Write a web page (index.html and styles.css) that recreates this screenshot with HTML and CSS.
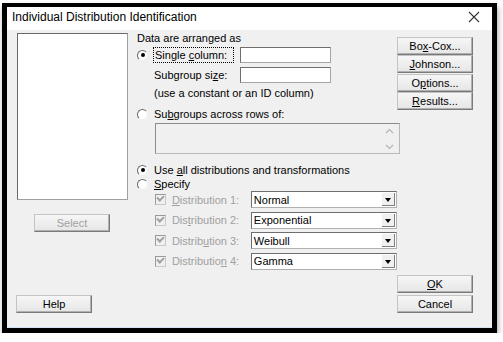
FILE: index.html
```html
<!DOCTYPE html>
<html>
<head>
    <title>Individual Distribution Identification</title>
    <link rel="stylesheet" href="styles.css">
</head>
<body>
    <div class="window">
        <div class="titlebar">
            <span class="title">Individual Distribution Identification</span>
            <svg class="close" width="12" height="12" viewBox="0 0 12 12">
                <path d="M1 1 L11 11 M11 1 L1 11" stroke="#333" stroke-width="1.1" fill="none"/>
            </svg>
        </div>

        <div class="content">
            <div class="col-left">
                <div class="listbox"></div>
                <div class="btn btn-select">Select</div>
                <div class="btn btn-help">Help</div>
            </div>

            <div class="col-mid">
                <div class="caption">Data are arranged as</div>

                <div class="row row-single">
                    <span class="radio checked"></span>
                    <span class="focus">Single <u>c</u>olumn:</span>
                    <span class="textbox"></span>
                </div>
                <div class="row row-size">
                    <span class="lbl">Subgroup si<u>z</u>e:</span>
                    <span class="textbox"></span>
                </div>
                <div class="note">(use a constant or an ID column)</div>

                <div class="row row-across">
                    <span class="radio"></span>
                    <span class="lbl">Su<u>b</u>groups across rows of:</span>
                </div>
                <div class="varbox">
                    <svg class="scroll" width="9" height="24" viewBox="0 0 9 24">
                        <path d="M1 6 L4.5 2.5 L8 6 M1 18 L4.5 21.5 L8 18" stroke="#b4b4b4" stroke-width="1.2" fill="none"/>
                    </svg>
                </div>

                <div class="row row-all">
                    <span class="radio checked"></span>
                    <span class="lbl">Use <u>a</u>ll distributions and transformations</span>
                </div>
                <div class="row row-specify">
                    <span class="radio"></span>
                    <span class="lbl"><u>S</u>pecify</span>
                </div>

                <div class="dists">
                    <div class="dist">
                        <span class="check"></span>
                        <span class="dlbl"><u>D</u>istribution 1:</span>
                        <div class="combo"><span>Normal</span><span class="drop"></span></div>
                    </div>
                    <div class="dist">
                        <span class="check"></span>
                        <span class="dlbl">Dis<u>t</u>ribution 2:</span>
                        <div class="combo"><span>Exponential</span><span class="drop"></span></div>
                    </div>
                    <div class="dist">
                        <span class="check"></span>
                        <span class="dlbl">Distrib<u>u</u>tion 3:</span>
                        <div class="combo"><span>Weibull</span><span class="drop"></span></div>
                    </div>
                    <div class="dist">
                        <span class="check"></span>
                        <span class="dlbl">Distributio<u>n</u> 4:</span>
                        <div class="combo"><span>Gamma</span><span class="drop"></span></div>
                    </div>
                </div>
            </div>

            <div class="col-right">
                <div class="btn">Bo<u>x</u>-Cox...</div>
                <div class="btn"><u>J</u>ohnson...</div>
                <div class="btn">O<u>p</u>tions...</div>
                <div class="btn"><u>R</u>esults...</div>
                <div class="btn btn-ok"><u>O</u>K</div>
                <div class="btn btn-cancel">Cancel</div>
            </div>
        </div>
    </div>
</body>
</html>
```

FILE: styles.css
```css
body {
    margin: 0;
    background-color: #ffffff;
    font-family: "Liberation Sans", Arial, sans-serif;
    font-size: 11px;
    color: #000000;
}

u {
    text-underline-offset: 1px;
}

.window {
    margin: 3px 0 0 2px;
    width: 485px;
    height: 321px;
    border: 5px solid #000000;
    border-top-width: 4px;
    box-shadow: 1px 4px 6px rgba(0, 0, 0, 0.35);
    display: flex;
    flex-direction: column;
}

.titlebar {
    height: 23px;
    background-color: #ffffff;
    display: flex;
    align-items: center;
    padding: 0 12px 0 5px;
}
.title {
    font-size: 12px;
    flex: 1;
    padding-bottom: 3px;
}
.close {
    margin-bottom: 3px;
}

.content {
    flex: 1;
    background-color: #f0f0f0;
    display: flex;
    border-bottom: 1px solid #d4e4f4;
}

/* left column */
.col-left {
    width: 129px;
    display: flex;
    flex-direction: column;
    padding: 3px 0 14px 0;
    box-sizing: border-box;
}
.listbox {
    margin-left: 10px;
    width: 109px;
    height: 165px;
    background-color: #ffffff;
    border: 1px solid #a0a0a0;
    border-top-color: #696969;
    border-left-color: #696969;
}
.btn-select {
    margin: 14px 0 0 27px;
    color: #a0a0a0;
}
.btn-help {
    margin: auto 0 0 9px;
}

/* buttons */
.btn {
    width: 74px;
    height: 16px;
    line-height: 16px;
    text-align: center;
    background: linear-gradient(#f6f6f6, #e6e6e6);
    border: 1px solid #c4c4c4;
    border-right-color: #7a7a7a;
    border-bottom-color: #7a7a7a;
    box-shadow: inset -1px -1px 0 #b0b0b0;
}

/* middle column */
.col-mid {
    width: 261px;
    display: flex;
    flex-direction: column;
}
.caption {
    height: 16px;
    line-height: 16px;
    margin-left: 1px;
}
.row {
    display: flex;
    align-items: center;
    height: 16px;
}
.row-single {
    margin-top: 1px;
}
.row-size {
    margin-top: 4px;
}
.row-across {
    margin-top: 7px;
    height: 14px;
}
.row-all {
    margin-top: 9px;
    height: 14px;
}
.row-specify {
    height: 14px;
}

.radio {
    width: 9px;
    height: 9px;
    margin-left: 1px;
    margin-right: 6px;
    border-radius: 50%;
    border: 1px solid;
    border-color: #6a6a6a #f0f0f0 #f0f0f0 #6a6a6a;
    background-color: #ffffff;
    position: relative;
}
.radio.checked::after {
    content: "";
    position: absolute;
    left: 2.5px;
    top: 2.5px;
    width: 4px;
    height: 4px;
    border-radius: 50%;
    background-color: #000000;
}

.focus {
    width: 78px;
    height: 14px;
    line-height: 14px;
    border: 1px dotted #000000;
    padding-left: 1px;
    box-sizing: content-box;
    margin-left: -1px;
}
.lbl {
    line-height: 14px;
}
.row-size .lbl {
    margin-left: 18px;
    width: 86px;
}
.textbox {
    width: 89px;
    height: 14px;
    background-color: #ffffff;
    border: 1px solid #a5a5a5;
    border-top-color: #6e6e6e;
    border-left-color: #6e6e6e;
}
.row-single .textbox {
    margin-left: 6px;
}

.note {
    margin: 3px 0 0 18px;
    height: 14px;
    line-height: 14px;
}

.varbox {
    margin: 2px 0 0 19px;
    width: 243px;
    height: 29px;
    border: 1px solid #b9b9b9;
    border-top-color: #8c8c8c;
    border-left-color: #8c8c8c;
    background-color: #f0f0f0;
    display: flex;
    justify-content: flex-end;
    align-items: center;
}
.scroll {
    margin-right: 5px;
}

/* distributions */
.dists {
    margin-top: 0;
    display: flex;
    flex-direction: column;
    gap: 3.5px;
}
.dist {
    display: flex;
    align-items: center;
    height: 17px;
    color: #a0a0a0;
}
.check {
    margin-left: 19px;
    width: 9px;
    height: 9px;
    border: 1px solid #c8c8c8;
    border-top-color: #9a9a9a;
    border-left-color: #9a9a9a;
    background-color: #f0f0f0;
    position: relative;
}
.check::after {
    content: "";
    position: absolute;
    left: 1px;
    top: 0px;
    width: 5px;
    height: 3px;
    border-left: 2px solid #a0a0a0;
    border-bottom: 2px solid #a0a0a0;
    transform: rotate(-45deg);
}
.dlbl {
    margin-left: 6px;
    width: 80px;
}
.combo {
    height: 15px;
    background-color: #ffffff;
    border: 1px solid #b0b0b0;
    border-top-color: #6e6e6e;
    border-left-color: #6e6e6e;
    color: #000000;
    display: flex;
    align-items: center;
    justify-content: space-between;
    padding-left: 2px;
    box-sizing: content-box;
    width: 144px;
}
.drop {
    width: 13px;
    height: 13px;
    margin-right: 1px;
    background-color: #f0f0f0;
    border-right: 1px solid #808080;
    border-bottom: 1px solid #808080;
    position: relative;
    box-sizing: border-box;
}
.drop::after {
    content: "";
    position: absolute;
    left: 3px;
    top: 5px;
    border-left: 3.5px solid transparent;
    border-right: 3.5px solid transparent;
    border-top: 4px solid #000000;
}

/* right column */
.col-right {
    width: 76px;
    display: flex;
    flex-direction: column;
    padding: 7px 0 14px 0;
    box-sizing: border-box;
}
.col-right .btn {
    margin-bottom: 0.3px;
}
.btn-ok {
    margin-top: auto;
}
.col-right .btn-ok {
    margin-bottom: 2px;
}
```
